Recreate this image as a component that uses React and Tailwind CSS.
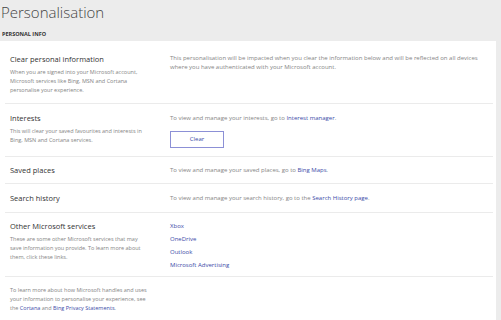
const rows = [
  {
    title: "Clear personal information",
    desc: [
      "When you are signed into your Microsoft account,",
      "Microsoft services like Bing, MSN and Cortana",
      "personalise your experience.",
    ],
    kind: "clear",
    pad: "pt-[9px] pb-[8px]",
  },
  {
    title: "Interests",
    desc: ["This will clear your saved favourites and interests in", "Bing, MSN and Cortana services."],
    kind: "interests",
    pad: "pt-[9px] pb-[8px]",
  },
  { title: "Saved places", desc: [], kind: "places", pad: "pt-[8px] pb-[8px]" },
  { title: "Search history", desc: [], kind: "history", pad: "pt-[9px] pb-[9px]" },
  {
    title: "Other Microsoft services",
    desc: [
      "These are some other Microsoft services that may",
      "save information you provide. To learn more about",
      "them, click these links.",
    ],
    kind: "services",
    pad: "pt-[8px] pb-[7px]",
  },
];

const Link = ({ children }) => <span className="text-[#3b4ba8]">{children}</span>;

const RightSide = ({ kind }) => {
  if (kind === "clear")
    return (
      <p className="text-[6px] leading-[9px] text-[#858585]">
        This personalisation will be impacted when you clear the information below and will be reflected on all devices
        <br />
        where you have authenticated with your Microsoft account.
      </p>
    );
  if (kind === "interests")
    return (
      <div>
        <p className="text-[6px] leading-[10px] text-[#858585]">
          To view and manage your interests, go to <Link>Interest manager</Link>.
        </p>
        <button className="mt-[4px] w-[54px] h-[17px] border border-[#8c90d6] text-[6px] text-[#3b4ba8] bg-white">
          Clear
        </button>
      </div>
    );
  if (kind === "places")
    return (
      <p className="text-[6px] leading-[10px] text-[#858585]">
        To view and manage your saved places, go to <Link>Bing Maps</Link>.
      </p>
    );
  if (kind === "history")
    return (
      <p className="text-[6px] leading-[10px] text-[#858585]">
        To view and manage your search history, go to the <Link>Search History page</Link>.
      </p>
    );
  return (
    <div className="flex flex-col gap-[5px] text-[6px] leading-[8px] text-[#3b4ba8] pt-[1px]">
      <span>Xbox</span>
      <span>OneDrive</span>
      <span>Outlook</span>
      <span>Microsoft Advertising</span>
    </div>
  );
};

export default function App() {
  return (
    <div
      className="w-[501px] h-[320px] overflow-hidden bg-[#ececec] pl-[1px]"
      style={{ fontFamily: '"Open Sans", "Noto Sans", sans-serif' }}
    >
      <h1 className="pt-[2px] text-[15px] leading-[20px] font-light text-[#444]">Personalisation</h1>
      <div className="mt-[8px] pl-[1px] text-[5.5px] leading-[8px] font-bold text-[#333]">PERSONAL INFO</div>
      <div className="mt-[3px] -ml-[1px] w-[496px] bg-white pl-[5px] pr-[3px] pt-[4px]">
        {rows.map((row) => (
          <div key={row.title} className={`flex border-b border-[#ebebeb] pl-[5px] ${row.pad}`}>
            <div className="w-[160px] shrink-0">
              <h2 className="text-[7.5px] leading-[10px] text-[#333]">{row.title}</h2>
              {row.desc.length > 0 && (
                <p className="mt-[4px] text-[5.5px] leading-[9px] text-[#858585]">
                  {row.desc.map((line) => (
                    <span key={line} className="block">
                      {line}
                    </span>
                  ))}
                </p>
              )}
            </div>
            <RightSide kind={row.kind} />
          </div>
        ))}
        <div className="pl-[5px] pt-[9px] pb-[20px] text-[5.5px] leading-[9px] text-[#858585]">
          <span className="block">To learn more about how Microsoft handles and uses</span>
          <span className="block">your information to personalise your experience, see</span>
          <span className="block">
            the <Link>Cortana</Link> and <Link>Bing Privacy Statements</Link>.
          </span>
        </div>
      </div>
    </div>
  );
}
